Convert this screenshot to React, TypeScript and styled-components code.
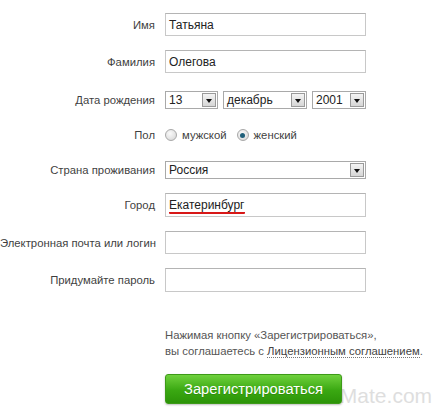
import React from "react";
import styled, { createGlobalStyle } from "styled-components";

const GlobalStyle = createGlobalStyle`
  html, body {
    margin: 0;
    padding: 0;
    background: #ffffff;
  }
  body {
    font-family: "Liberation Sans", Arial, sans-serif;
  }
`;

interface RowProps {
  $top: number;
  $height: number;
}

interface SelectProps {
  $width: number;
}

interface RadioProps {
  $checked?: boolean;
}

const App: React.FC = () => {
  return (
    <Page>
      <GlobalStyle />
      <Form>
        <Row $top={13} $height={23}>
          <Label>Имя</Label>
          <TextBox>Татьяна</TextBox>
        </Row>
        <Row $top={14} $height={23}>
          <Label>Фамилия</Label>
          <TextBox>Олегова</TextBox>
        </Row>
        <Row $top={18} $height={18}>
          <Label>Дата рождения</Label>
          <Inline>
            <Select $width={53}>
              <SelectValue>13</SelectValue>
              <Arrow />
            </Select>
            <Select $width={84}>
              <SelectValue>декабрь</SelectValue>
              <Arrow />
            </Select>
            <Select $width={54}>
              <SelectValue>2001</SelectValue>
              <Arrow />
            </Select>
          </Inline>
        </Row>
        <Row $top={18} $height={16}>
          <Label>Пол</Label>
          <Inline>
            <RadioLabel>
              <Radio />
              мужской
            </RadioLabel>
            <RadioLabel>
              <Radio $checked />
              женский
            </RadioLabel>
          </Inline>
        </Row>
        <Row $top={18} $height={18}>
          <Label>Страна проживания</Label>
          <Select $width={201}>
            <SelectValue>Россия</SelectValue>
            <Arrow />
          </Select>
        </Row>
        <Row $top={14} $height={24}>
          <Label>Город</Label>
          <TextBox>
            <Misspelled>Екатеринбург</Misspelled>
          </TextBox>
        </Row>
        <Row $top={14} $height={23}>
          <Label>Электронная почта или логин</Label>
          <TextBox />
        </Row>
        <Row $top={14} $height={24}>
          <Label>Придумайте пароль</Label>
          <TextBox />
        </Row>
        <Footer>
          <Agreement>
            Нажимая кнопку «Зарегистрироваться»,
            <br />
            вы соглашаетесь с <AgreementLink>Лицензионным соглашением</AgreementLink>.
          </Agreement>
          <SubmitButton>Зарегистрироваться</SubmitButton>
        </Footer>
      </Form>
      <Watermark>
        <Faint>Ne</Faint>Mate.com
      </Watermark>
    </Page>
  );
};

export default App;

const Page = styled.div`
  position: relative;
  width: 434px;
  height: 410px;
  overflow: hidden;
  background: #ffffff;
`;

const Form = styled.div`
  display: flex;
  flex-direction: column;
`;

const Row = styled.div<RowProps>`
  display: grid;
  grid-template-columns: 155px 201px;
  column-gap: 10px;
  align-items: center;
  margin-top: ${(p) => p.$top}px;
  height: ${(p) => p.$height}px;
`;

const Label = styled.div`
  text-align: right;
  font-size: 11.3px;
  color: #3f3f3f;
  white-space: nowrap;
`;

const TextBox = styled.div`
  box-sizing: border-box;
  height: 100%;
  border: 1px solid #c8c8c8;
  border-top-color: #b4b4b4;
  padding: 0 3px;
  display: flex;
  align-items: center;
  font-size: 12px;
  color: #222;
  background: #fff;
`;

const Misspelled = styled.span`
  display: inline-block;
  line-height: 14px;
  border-bottom: 2px solid #d81818;
  border-radius: 1px;
  margin-top: 1px;
`;

const Inline = styled.div`
  display: flex;
  align-items: center;
  gap: 5px;
`;

const Select = styled.div<SelectProps>`
  box-sizing: border-box;
  width: ${(p) => p.$width}px;
  height: 18px;
  border: 1px solid #a9a9a9;
  display: flex;
  align-items: stretch;
  background: #fff;
  padding: 1px;
`;

const SelectValue = styled.div`
  flex: 1;
  font-size: 12px;
  color: #222;
  padding-left: 2px;
  line-height: 14px;
`;

const Arrow = styled.div`
  box-sizing: border-box;
  width: 14px;
  border: 1px solid #9a9a9a;
  background: linear-gradient(#f4f4f4, #d6d6d6);
  position: relative;
  &::after {
    content: "";
    position: absolute;
    left: 50%;
    top: 50%;
    margin-left: -3px;
    margin-top: -1px;
    border-left: 3px solid transparent;
    border-right: 3px solid transparent;
    border-top: 4px solid #111;
  }
`;

const RadioLabel = styled.div`
  display: flex;
  align-items: center;
  gap: 5px;
  font-size: 11.3px;
  color: #3f3f3f;
  margin-right: 5px;
`;

const Radio = styled.span<RadioProps>`
  box-sizing: border-box;
  width: 12px;
  height: 12px;
  border-radius: 50%;
  border: 1px solid #a8a8a8;
  background: radial-gradient(circle at 40% 35%, #fafafa, #d4d4d4);
  display: flex;
  align-items: center;
  justify-content: center;
  &::after {
    content: "";
    width: 5px;
    height: 5px;
    border-radius: 50%;
    background: ${(p) => (p.$checked ? "#1f5f7a" : "transparent")};
  }
`;

const Footer = styled.div`
  margin-top: 35px;
  margin-left: 165px;
  display: flex;
  flex-direction: column;
  align-items: flex-start;
`;

const Agreement = styled.div`
  font-size: 11.3px;
  line-height: 16px;
  color: #555;
  white-space: nowrap;
`;

const AgreementLink = styled.span`
  color: #444;
  border-bottom: 1px dotted #777;
`;

const SubmitButton = styled.button`
  position: relative;
  z-index: 1;
  margin-top: 15px;
  width: 177px;
  height: 30px;
  border: 1px solid #3d9a18;
  border-radius: 3px;
  background: linear-gradient(#6fd13d, #3aa812 55%, #2c9408);
  color: #fff;
  font-family: "Liberation Sans", Arial, sans-serif;
  font-size: 14.7px;
  padding: 0;
  box-shadow: 0 1px 2px rgba(0, 0, 0, 0.25);
  text-shadow: 0 1px 0 rgba(0, 0, 0, 0.15);
  cursor: pointer;
`;

const Watermark = styled.div`
  position: absolute;
  left: 313px;
  top: 384px;
  font-family: "Liberation Sans", Arial, sans-serif;
  font-size: 21px;
  color: #dedede;
  pointer-events: none;
`;

const Faint = styled.span`
  color: #f2f2f2;
`;
